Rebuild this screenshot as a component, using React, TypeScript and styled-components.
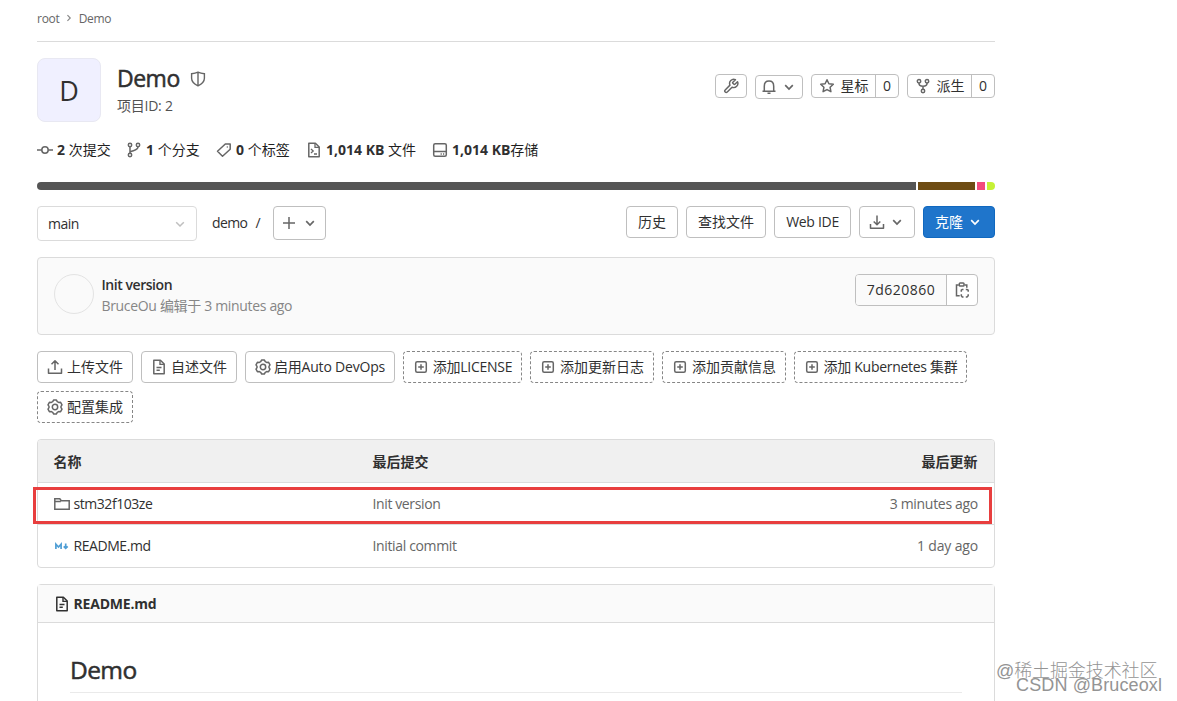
import React from "react";
import styled, { createGlobalStyle, css } from "styled-components";

const GlobalStyle = createGlobalStyle`
  *, *::before, *::after { box-sizing: border-box; }
  html, body { margin: 0; background: #fff; overflow: hidden; }
  body {
    font-family: "Open Sans", "Noto Sans CJK SC", sans-serif;
    font-size: 14px;
    line-height: 20px;
    color: #303030;
  }
`;

const Page = styled.div`
  position: relative;
  width: 1177px;
  height: 701px;
  overflow: hidden;
  background: #fff;
`;

const Content = styled.main`
  width: 958px;
  margin-left: 37px;
`;

const Text = styled.span<{ $ls?: number }>`
  white-space: nowrap;
  letter-spacing: ${(p) => p.$ls ?? 0}px;
`;

const Breadcrumb = styled.nav`
  display: flex;
  align-items: center;
  height: 42px;
  padding-bottom: 3px;
  border-bottom: 1px solid #dbdbdb;
  font-size: 12px;
  color: #666;
  svg { margin: 0 5px 2px 4px; }
`;

const ProjectHeader = styled.header`
  display: flex;
  height: 64px;
  margin-top: 16px;
`;

const Avatar = styled.div`
  display: flex;
  align-items: center;
  justify-content: center;
  width: 64px;
  height: 64px;
  border: 1px solid #e8e8f2;
  border-radius: 8px;
  background: #f0f0ff;
  font-size: 27px;
  line-height: 32px;
  padding-top: 1px;
`;

const ProjectName = styled.div`
  flex: 1;
  padding: 7px 0 0 16px;
`;

const Title = styled.h1`
  display: flex;
  align-items: center;
  gap: 10px;
  margin: 0;
  font-size: 23px;
  line-height: 26px;
  font-weight: 400;
  -webkit-text-stroke: 0.5px #303030;
  svg { margin-top: 2px; }
`;

const ProjectId = styled.div`
  margin-top: 5px;
  color: #525252;
`;

const Actions = styled.div`
  display: flex;
  gap: 8px;
  padding-top: 16px;
`;

const SmallButton = styled.button<{ $w: number; $drop?: number }>`
  display: flex;
  align-items: center;
  justify-content: center;
  gap: 4px;
  width: ${(p) => p.$w}px;
  height: 24px;
  margin: ${(p) => p.$drop ?? 0}px 0 0;
  padding: 0;
  border: 1px solid #bfbfbf;
  border-radius: 4px;
  background: #fff;
  color: #303030;
  font: inherit;
`;

const CountGroup = styled.div`
  display: flex;
  width: 88px;
  height: 24px;
  border: 1px solid #bfbfbf;
  border-radius: 4px;
`;

const CountLabel = styled.div`
  display: flex;
  align-items: center;
  gap: 5.5px;
  width: 64px;
  padding-left: 7px;
  border-right: 1px solid #bfbfbf;
`;

const Count = styled.div`
  flex: 1;
  text-align: center;
  line-height: 22px;
`;

const Stats = styled.div`
  display: flex;
  gap: 15px;
  height: 20px;
  margin-top: 18px;
  color: #1f1f1f;
`;

const Stat = styled.div<{ $w: number }>`
  display: flex;
  align-items: center;
  gap: 4px;
  width: ${(p) => p.$w}px;
  white-space: nowrap;
  b { font-weight: 700; color: #303030; }
`;

const LanguageBar = styled.div`
  display: flex;
  gap: 2px;
  height: 8px;
  margin-top: 22px;
  border-radius: 4px;
  overflow: hidden;
`;

const Language = styled.span<{ $w: number; $color: string }>`
  width: ${(p) => p.$w}px;
  background: ${(p) => p.$color};
`;

const Toolbar = styled.div`
  display: flex;
  height: 35px;
  margin-top: 16px;
`;

const BranchSelect = styled.div`
  display: flex;
  align-items: center;
  justify-content: space-between;
  width: 160px;
  height: 35px;
  padding: 1px 8px 0 10px;
  border: 1px solid #dbdbdb;
  border-radius: 4px;
`;

const Path = styled.div`
  display: flex;
  gap: 8px;
  width: 76px;
  padding: 7px 0 0 15px;
`;

const Spacer = styled.div`
  flex: 1;
`;

const ButtonRow = styled.div`
  display: flex;
  gap: 8px;
`;

const Button = styled.button<{ $w: number; $h?: number; $variant?: "primary" | "dashed"; $gap?: number }>`
  display: flex;
  align-items: center;
  justify-content: center;
  gap: ${(p) => p.$gap ?? 3}px;
  width: ${(p) => p.$w}px;
  height: ${(p) => p.$h ?? 32}px;
  padding: 0;
  border: 1px solid #bfbfbf;
  border-radius: 4px;
  background: #fff;
  color: #303030;
  font: inherit;
  white-space: nowrap;
  ${(p) => p.$variant === "primary" && css`
    border-color: #1068bf;
    background: #1f75cb;
    color: #fff;
    svg { color: #fff; }
  `}
  ${(p) => p.$variant === "dashed" && css`
    border: 1px dashed #868686;
  `}
`;

const CommitBox = styled.section`
  display: flex;
  height: 78px;
  margin-top: 16px;
  padding: 16px;
  border: 1px solid #dbdbdb;
  border-radius: 4px;
  background: #fafafa;
`;

const CommitAvatar = styled.div`
  width: 40px;
  height: 40px;
  border: 1px solid #e3e3e3;
  border-radius: 50%;
`;

const CommitInfo = styled.div`
  flex: 1;
  padding-left: 7.5px;
  line-height: 21px;
  color: #868686;
`;

const CommitTitle = styled.div`
  font-weight: 600;
  color: #303030;
`;

const ShaGroup = styled.div`
  display: flex;
  width: 123px;
  height: 32px;
  border: 1px solid #bfbfbf;
  border-radius: 4px;
  background: #fff;
  overflow: hidden;
`;

const Sha = styled.div`
  width: 91px;
  border-right: 1px solid #bfbfbf;
  background: #fafafa;
  text-align: center;
  line-height: 30px;
`;

const Copy = styled.div`
  display: flex;
  flex: 1;
  align-items: center;
  justify-content: center;
`;

const QuickActions = styled.div`
  display: flex;
  flex-wrap: wrap;
  gap: 8px;
  margin-top: 16px;
`;

const TableWrap = styled.div`
  position: relative;
  margin-top: 16px;
`;

const FileTable = styled.div`
  height: 129px;
  border: 1px solid #dbdbdb;
  border-radius: 4px;
  overflow: hidden;
`;

const Row = styled.div<{ $head?: boolean }>`
  display: grid;
  grid-template-columns: 319px 1fr auto;
  align-items: center;
  height: ${(p) => (p.$head ? 43 : 42)}px;
  padding: 0 16px 0 15.5px;
  color: #666;
  border-bottom: 1px solid #dbdbdb;
  &:last-child { border-bottom: 0; }
  ${(p) => p.$head && css`
    background: #f0f0f0;
    color: #303030;
    font-weight: 700;
    padding-top: 2px;
    padding-right: 16.5px;
  `}
`;

const FileName = styled.div`
  display: flex;
  align-items: center;
  gap: 4px;
  color: #303030;
`;

const Highlight = styled.div`
  position: absolute;
  left: -4px;
  top: 48px;
  width: 959px;
  height: 37px;
  border: 3px solid #e83e3e;
`;

const Readme = styled.section`
  height: 140px;
  margin-top: 16px;
  border: 1px solid #dbdbdb;
  border-radius: 4px 4px 0 0;
`;

const ReadmeHead = styled.div`
  display: flex;
  align-items: center;
  gap: 3.5px;
  height: 38px;
  padding-left: 16px;
  border-bottom: 1px solid #dbdbdb;
  background: #fafafa;
  font-weight: 700;
  svg { color: #303030; }
`;

const ReadmeTitle = styled.h2`
  height: 38px;
  margin: 32px 32px 0;
  border-bottom: 1px solid #eaeaea;
  font-size: 24.5px;
  line-height: 30px;
  font-weight: 400;
  -webkit-text-stroke: 0.5px #303030;
`;

const Watermark = styled.div<{ $x: number; $y: number; $size: number; $ls?: number }>`
  position: absolute;
  left: ${(p) => p.$x}px;
  top: ${(p) => p.$y}px;
  font-family: "Liberation Sans", "Noto Sans CJK SC", sans-serif;
  font-size: ${(p) => p.$size}px;
  font-weight: 300;
  line-height: 22px;
  letter-spacing: ${(p) => p.$ls ?? 0}px;
  white-space: nowrap;
  color: #949494;
`;

const Svg = styled.svg<{ $color: string }>`
  display: block;
  flex: none;
  color: ${(p) => p.$color};
  fill: none;
  stroke: currentColor;
`;

type IconName = keyof typeof shapes;

const shapes = {
  chevronRight: <path d="M5.5 3.5 10 8l-4.5 4.5" />,
  chevronDown: <path d="M4.2 6.2 8 10l3.8-3.8" />,
  shield: <path d="M8 1.2C6 2.2 4 2.6 1.6 2.7v4.600c0 3.500 3 6 6.400 7.500 3.400-1.500 6.400-4 6.400-7.500V2.700C12 2.600 10 2.200 8 1.200zM8 1.500v13" />,
  wrench: <path transform="translate(-.3 -.1) scale(.69)" strokeWidth="2.1" strokeLinejoin="round" d="M14.7 6.3a1 1 0 0 0 0 1.4l1.6 1.6a1 1 0 0 0 1.4 0l3.77-3.77a6 6 0 0 1-7.94 7.94l-6.91 6.91a2.12 2.12 0 0 1-3-3l6.91-6.91a6 6 0 0 1 7.94-7.94l-3.76 3.76z" />,
  bell: <path d="M1.5 12.3h13M3.3 12V7.2C3.3 4.2 5 2 8 2s4.7 2.2 4.7 5.2V12M6.5 14.3h3" />,
  star: <path strokeLinejoin="round" d="m8 1.7 1.9 4 4.4.6-3.2 3 .8 4.400L8 11.600l-3.900 2.100.8-4.400-3.200-3 4.400-.6z" />,
  fork: <><circle cx="4" cy="3.2" r="1.7" /><circle cx="12" cy="3.2" r="1.7" /><circle cx="8" cy="13" r="1.7" /><path d="M4 5v.5C4 7.5 5.5 8.2 8 8.2s4-.7 4-2.7V5M8 8.2v3" /></>,
  commit: <><circle cx="8" cy="8" r="3.2" /><path d="M0 8h4.8M11.2 8H16" /></>,
  branch: <><circle cx="4" cy="3" r="1.7" /><circle cx="12" cy="3" r="1.7" /><circle cx="4" cy="13" r="1.7" /><path d="M4 4.7v6.6M12 4.7C12 8 8.5 8 4.3 9.8" /></>,
  tag: <><path strokeLinejoin="round" d="M1.5 9.2 9.3 2h4.9v5.2L6.5 14.2z" /><circle cx="11.3" cy="5" r=".7" fill="currentColor" stroke="none" /></>,
  docCode: <><path d="M2.8 1.2h6.6L13.2 5v9.8H2.8z" strokeLinejoin="round" /><path d="M9 1.2V5.4h4.2M5 7l2.2 2L5 11M8 12h3" strokeWidth="1.3" /></>,
  disk: <><rect x="1.7" y="1.7" width="12.6" height="12.6" rx="1.5" /><path d="M1.7 9.5h12.6" /><path d="M8.6 12h1.2M11 12h1.2" /></>,
  plus: <path d="M8 2v12M2 8h12" />,
  download: <path d="M8 1.5v9M4.7 7.5 8 10.7l3.3-3.2M1.5 10v4.2h13V10" strokeLinejoin="round" />,
  upload: <path d="M8 11V2M4.5 5.3 8 1.8l3.5 3.5M1.5 9.5v4.7h13V9.5" strokeLinejoin="round" />,
  doc: <><path d="M2.8 1.2h6.6L13.2 5v9.8H2.8z" strokeLinejoin="round" /><path d="M9 1.2v4.2h4.2M5.5 8.5h5M5.5 11.3h3.3" strokeWidth="1.4" /></>,
  gear: <><path strokeLinejoin="round" d="M6.7 1h2.6l1 1.7 1.3.7 2-.1 1.4 2.5-1 1.5v1.4l1 1.5-1.4 2.5-2-.1-1.3.7-1 1.7H6.7l-1-1.7-1.3-.7-2 .1L1 10.2l1-1.5V7.3L1 5.8l1.4-2.5 2 .1 1.3-.7z" /><circle cx="8" cy="8" r="2.7" /></>,
  plusSquare: <><rect x="2.7" y="2.7" width="10.6" height="10.6" rx="1.5" /><path d="M8 5.2v5.6M5.2 8h5.6" /></>,
  folder: <path d="M.8 13.3V2.7h5l1.5 2h7.9v8.6zM.8 5.4h6" />,
  paste: <><path d="M4.8 3H2.5v10.8h3.2M10.5 3h2.3v2.7" /><rect x="5.3" y=".9" width="4.7" height="3.2" rx=".8" /><path d="M7.3 9.8V8.2l1-.7h1.2M11.8 7.5H13l1.2.7v1.6M14.2 12.2v1.6l-1.2 1.2h-1.2M9.5 15H8.3l-1-1.2v-1.6" /></>,
};

function Icon({ name, size = 16, color = "#666", weight = 1.5 }: { name: IconName; size?: number; color?: string; weight?: number }) {
  return (
    <Svg width={size} height={size} viewBox="0 0 16 16" strokeWidth={weight} $color={color} aria-hidden>
      {shapes[name]}
    </Svg>
  );
}

function MarkdownIcon() {
  return (
    <Svg width={16} height={16} viewBox="0 0 16 16" strokeWidth={1.7} $color="#519fd5" aria-hidden>
      <path d="M1.9 11V6.2L4.5 9l2.6-2.8V11M11.7 5.5v4.5M9.7 8.3l2 2 2-2" />
    </Svg>
  );
}

const languages = [
  { w: 879, color: "#555555" },
  { w: 57, color: "#6e4c13" },
  { w: 8, color: "#f34b7d" },
  { w: 8, color: "#c6f135" },
];

const quickActions: { label: string; icon: IconName; w: number; dashed?: boolean; ls?: number; gap?: number }[] = [
  { label: "上传文件", icon: "upload", w: 96, gap: 4 },
  { label: "自述文件", icon: "doc", w: 96, gap: 4 },
  { label: "启用Auto DevOps", icon: "gear", w: 150, ls: -0.2 },
  { label: "添加LICENSE", icon: "plusSquare", w: 119, dashed: true, ls: -0.25, gap: 4 },
  { label: "添加更新日志", icon: "plusSquare", w: 124, dashed: true, gap: 4 },
  { label: "添加贡献信息", icon: "plusSquare", w: 124, dashed: true, gap: 4 },
  { label: "添加 Kubernetes 集群", icon: "plusSquare", w: 173, dashed: true, ls: -0.3, gap: 4 },
  { label: "配置集成", icon: "gear", w: 96, dashed: true, gap: 4 },
];

export default function App() {
  return (
    <>
      <GlobalStyle />
      <Page>
        <Content>
          <Breadcrumb>
            <Text $ls={-0.25}>root</Text>
            <Icon name="chevronRight" size={10} color="#868686" weight={1.8} />
            <Text $ls={-0.3}>Demo</Text>
          </Breadcrumb>

          <ProjectHeader>
            <Avatar>D</Avatar>
            <ProjectName>
              <Title><Text $ls={-0.5}>Demo</Text><Icon name="shield" weight={1.4} /></Title>
              <ProjectId><Text $ls={-0.25}>项目ID: 2</Text></ProjectId>
            </ProjectName>
            <Actions>
              <SmallButton $w={32}><Icon name="wrench" /></SmallButton>
              <SmallButton $w={48} $drop={1}><Icon name="bell" /><Icon name="chevronDown" weight={1.7} /></SmallButton>
              <CountGroup>
                <CountLabel><Icon name="star" /><Text>星标</Text></CountLabel>
                <Count>0</Count>
              </CountGroup>
              <CountGroup>
                <CountLabel><Icon name="fork" /><Text>派生</Text></CountLabel>
                <Count>0</Count>
              </CountGroup>
            </Actions>
          </ProjectHeader>

          <Stats>
            <Stat $w={74}><Icon name="commit" /><span><b>2</b> 次提交</span></Stat>
            <Stat $w={75}><Icon name="branch" /><span><b>1</b> 个分支</span></Stat>
            <Stat $w={75}><Icon name="tag" /><span><b>0</b> 个标签</span></Stat>
            <Stat $w={111}><Icon name="docCode" /><span><b>1,014 KB</b> 文件</span></Stat>
            <Stat $w={107}><Icon name="disk" /><span><b>1,014 KB</b>存储</span></Stat>
          </Stats>

          <LanguageBar>
            {languages.map((l) => <Language key={l.color} $w={l.w} $color={l.color} />)}
          </LanguageBar>

          <Toolbar>
            <BranchSelect><Text $ls={-0.5}>main</Text><Icon name="chevronDown" color="#bfbfbf" /></BranchSelect>
            <Path><Text $ls={-0.6}>demo</Text><Text>/</Text></Path>
            <Button $w={53} $h={34} $gap={5}><Icon name="plus" /><Icon name="chevronDown" weight={1.7} /></Button>
            <Spacer />
            <ButtonRow>
              <Button $w={52}>历史</Button>
              <Button $w={80}>查找文件</Button>
              <Button $w={77}><Text $ls={-0.3}>Web IDE</Text></Button>
              <Button $w={56} $gap={4}><Icon name="download" /><Icon name="chevronDown" weight={1.7} /></Button>
              <Button $w={72} $variant="primary" $gap={4}>克隆<Icon name="chevronDown" weight={1.7} /></Button>
            </ButtonRow>
          </Toolbar>

          <CommitBox>
            <CommitAvatar />
            <CommitInfo>
              <CommitTitle><Text $ls={-0.45}>Init version</Text></CommitTitle>
              <Text $ls={-0.33}>BruceOu 编辑于 3 minutes ago</Text>
            </CommitInfo>
            <ShaGroup>
              <Sha><Text $ls={0.5}>7d620860</Text></Sha>
              <Copy><Icon name="paste" /></Copy>
            </ShaGroup>
          </CommitBox>

          <QuickActions>
            {quickActions.map((a) => (
              <Button key={a.label} $w={a.w} $gap={a.gap} $variant={a.dashed ? "dashed" : undefined}>
                <Icon name={a.icon} /><Text $ls={a.ls}>{a.label}</Text>
              </Button>
            ))}
          </QuickActions>

          <TableWrap>
            <FileTable>
              <Row $head><span>名称</span><span>最后提交</span><span>最后更新</span></Row>
              <Row>
                <FileName><Icon name="folder" /><Text $ls={-0.45}>stm32f103ze</Text></FileName>
                <Text $ls={-0.38}>Init version</Text>
                <Text $ls={-0.3}>3 minutes ago</Text>
              </Row>
              <Row>
                <FileName><MarkdownIcon /><Text $ls={-0.43}>README.md</Text></FileName>
                <Text $ls={-0.36}>Initial commit</Text>
                <Text $ls={-0.15}>1 day ago</Text>
              </Row>
            </FileTable>
            <Highlight />
          </TableWrap>

          <Readme>
            <ReadmeHead><Icon name="doc" /><Text $ls={-0.2}>README.md</Text></ReadmeHead>
            <ReadmeTitle><Text $ls={-0.6}>Demo</Text></ReadmeTitle>
          </Readme>
        </Content>
        <Watermark $x={996} $y={660} $size={18} $ls={-0.1}>@稀土掘金技术社区</Watermark>
        <Watermark $x={1016} $y={674} $size={18} $ls={0.13}>CSDN @Bruceoxl</Watermark>
      </Page>
    </>
  );
}
